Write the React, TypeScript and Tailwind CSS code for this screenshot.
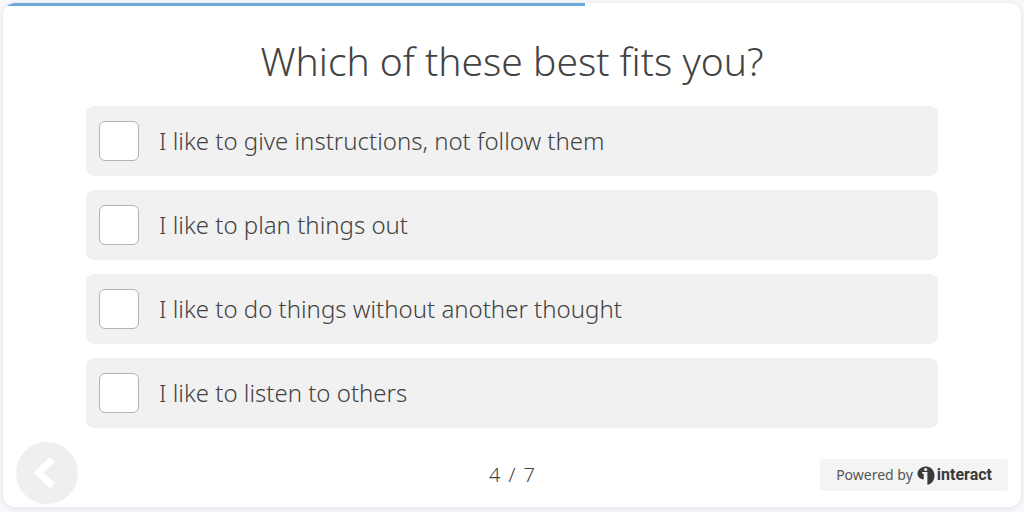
import { useState } from 'react';

const question = 'Which of these best fits you?';

const options = [
  'I like to give instructions, not follow them',
  'I like to plan things out',
  'I like to do things without another thought',
  'I like to listen to others',
];

const current = 4;
const total = 7;

function InteractMark() {
  return (
    <svg viewBox="0 0 18 19" className="h-[19px] w-[18px]" aria-hidden="true">
      {/* left lobe */}
      <path
        d="M9 .5C4.300.5.500 3.800.500 7.700c0 2.900 2.200 5.200 6.200 5.700V7.800H5.200V6.100H10V.6Z"
        fill="#3a3a3a"
      />
      {/* right lobe */}
      <path d="M9 .5c4.800 0 8.500 3.900 8.500 8.900 0 4.800-2.700 8.600-7.100 9.400V6.100H9Z" fill="#3a3a3a" />
      <circle cx="8.700" cy="3.600" r="1.500" fill="#f4f4f4" />
    </svg>
  );
}

export default function App() {
  const [selected, setSelected] = useState<string[]>([]);

  const toggle = (option: string) =>
    setSelected((prev) =>
      prev.includes(option) ? prev.filter((o) => o !== option) : [...prev, option]
    );

  return (
    <div className="min-h-screen bg-[#f8f9fb] px-[3px] pt-[3px] pb-[5px] font-['Noto_Sans','Open_Sans',sans-serif] text-[#434343]">
      <main className="overflow-hidden rounded-xl bg-white pb-[3px] shadow-[0_1px_6px_rgba(40,50,90,0.12)]">
        {/* Progress */}
        <div className="h-[3px]">
          <div className="h-full bg-[#6fa8dc]" style={{ width: `${(current / total) * 100}%` }} />
        </div>

        <h1 className="px-4 pt-[27px] pb-[17px] text-center text-[39px] leading-[56px] font-light">
          {question}
        </h1>

        {/* Answers */}
        <div className="flex flex-col gap-3.5 px-[83px]">
          {options.map((option) => (
            <label
              key={option}
              className="flex min-h-[70px] cursor-pointer items-center gap-5 rounded-lg bg-[#f1f1f1] px-[13px] text-2xl font-light"
            >
              <input
                type="checkbox"
                checked={selected.includes(option)}
                onChange={() => toggle(option)}
                className="size-10 shrink-0 appearance-none rounded-md border border-[#b3b3b3] bg-white checked:bg-[#6fa8dc]"
              />
              <span>{option}</span>
            </label>
          ))}
        </div>

        {/* Footer */}
        <div className="mt-3.5 grid grid-cols-[1fr_auto_1fr] items-center px-[13px]">
          <button
            type="button"
            aria-label="Previous question"
            className="flex size-[62px] items-center justify-center rounded-full bg-[#efefef]"
          >
            <svg viewBox="0 0 62 62" className="size-full" aria-hidden="true">
              <path
                d="M36.500 17.500 22.500 30.500l14 13"
                fill="none"
                stroke="#fff"
                strokeWidth="7"
              />
            </svg>
          </button>
          <p className="flex gap-2 pt-1 text-xl font-light">
            <span>{current}</span>
            <span>/</span>
            <span>{total}</span>
          </p>
          <a
            href="#interact"
            className="mt-1 flex h-8 items-center justify-self-end rounded bg-[#f4f4f4] px-4 text-sm text-[#555]"
          >
            <span className="mr-1">Powered by</span>
            <InteractMark />
            <span className="ml-0.5 font-['Roboto','Open_Sans',sans-serif] text-base font-bold text-[#3a3a3a]">
              interact
            </span>
          </a>
        </div>
      </main>
    </div>
  );
}
